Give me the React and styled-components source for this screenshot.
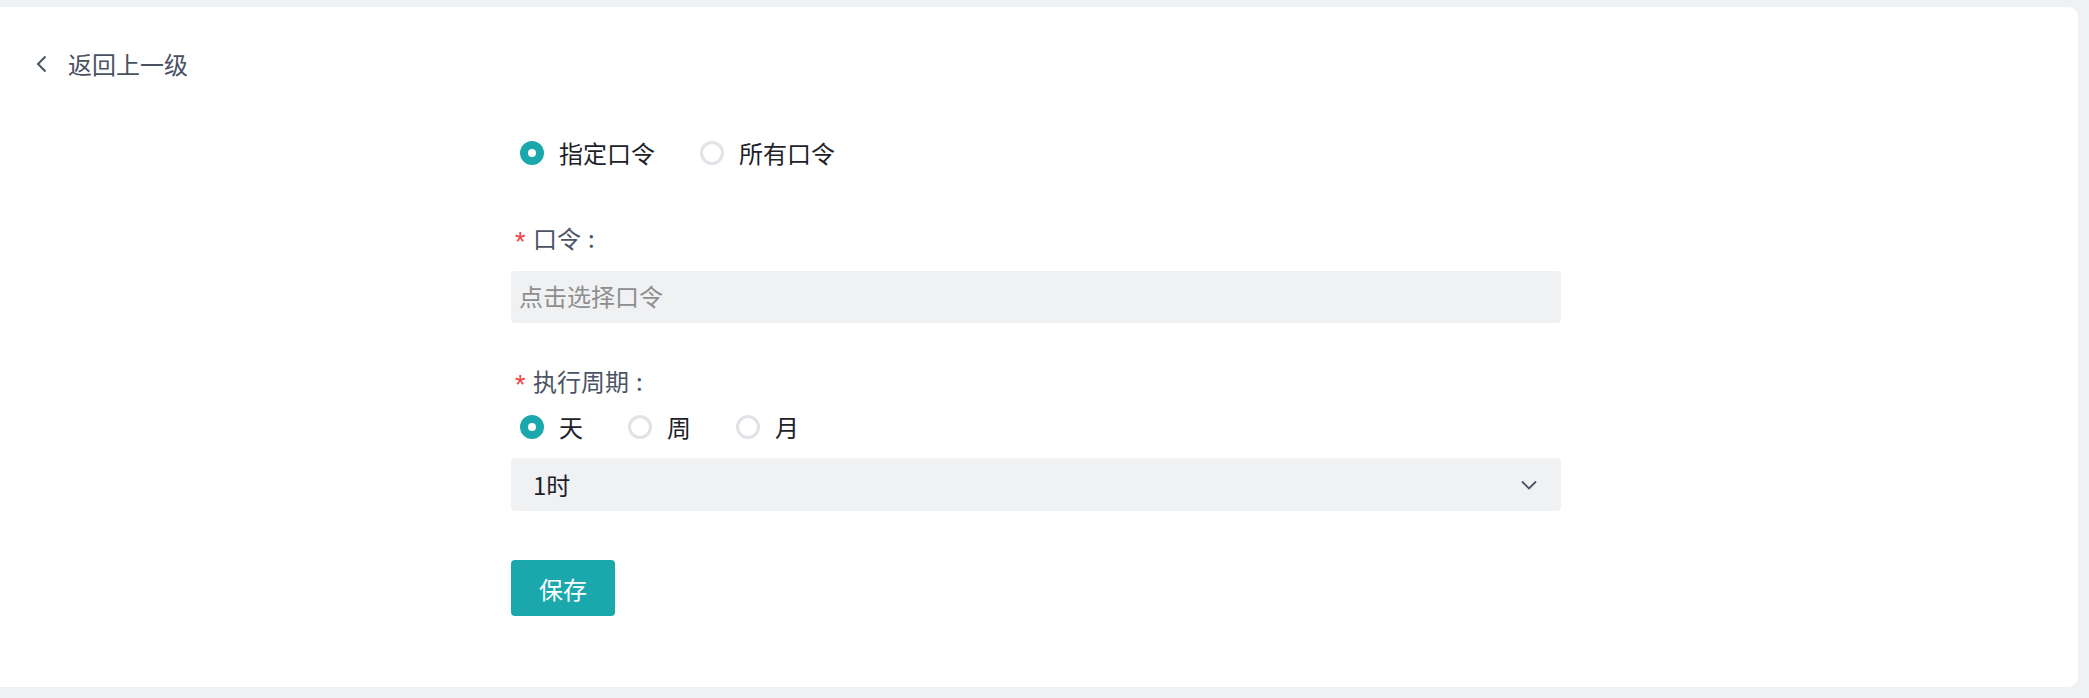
import React, { useState } from "react";
import styled, { createGlobalStyle } from "styled-components";

const GlobalStyle = createGlobalStyle`
  html, body {
    margin: 0;
    padding: 0;
    background: #f0f1f3;
  }
  * {
    box-sizing: border-box;
  }
`;

const Page = styled.div`
  height: 698px;
  padding: 7px 11px 11px 0;
  font-family: "Noto Sans CJK SC", "Noto Sans", sans-serif;
`;

const Card = styled.div`
  height: 680px;
  background: #ffffff;
  border-radius: 0 10px 10px 0;
  padding-top: 45px;
`;

const Back = styled.div`
  display: flex;
  align-items: center;
  height: 24px;
  padding-left: 35px;
  font-size: 24px;
  line-height: 24px;
  color: #4a5262;
  cursor: pointer;

  svg {
    margin-right: 20px;
  }
`;

const Form = styled.div`
  width: 1050px;
  margin-left: 511px;
  display: flex;
  flex-direction: column;
`;

const RadioRow = styled.div`
  display: flex;
  align-items: center;
  height: 24px;
  padding-left: 9px;
  gap: ${(p) => p.gap}px;
  margin-top: ${(p) => p.top}px;
`;

const RadioItem = styled.label`
  display: flex;
  align-items: center;
  gap: 15px;
  font-size: 24px;
  line-height: 24px;
  color: #1d2129;
  cursor: pointer;
`;

const Circle = styled.span`
  width: 24px;
  height: 24px;
  border-radius: 50%;
  background: #fff;
  border: ${(p) => (p.checked ? "8px solid #1ba8ad" : "3px solid #e2e3e8")};
`;

const Label = styled.div`
  display: flex;
  align-items: center;
  height: 24px;
  margin-top: ${(p) => p.top}px;
  font-size: 24px;
  line-height: 24px;
  color: #4b5466;
`;

const Star = styled.span`
  color: #f04343;
  font-size: 27px;
  width: 22px;
  padding-left: 4px;
  font-family: "Liberation Sans", sans-serif;
  line-height: 24px;
  margin-top: 8px;
`;

const Colon = styled.span`
  margin-left: 7px;
`;

const Input = styled.div`
  margin-top: 21px;
  height: 52px;
  display: flex;
  align-items: center;
  padding: 0 0 3px 8px;
  background: #f0f1f3;
  border-radius: 4px;
  font-size: 24px;
  line-height: 24px;
  color: #8e8e8e;
`;

const Select = styled.div`
  margin-top: 19px;
  height: 53px;
  display: flex;
  align-items: center;
  justify-content: space-between;
  padding: 0 24px 0 22px;
  background: #f0f1f3;
  border-radius: 4px;
  font-size: 24px;
  line-height: 24px;
  color: #1d2129;
`;

const Button = styled.button`
  margin-top: 49px;
  width: 104px;
  height: 56px;
  border: none;
  border-radius: 4px;
  background: #1ba8ad;
  color: #ffffff;
  font-family: inherit;
  font-size: 24px;
  cursor: pointer;
`;

const Radio = ({ checked, children, onClick }) => (
  <RadioItem onClick={onClick}>
    <Circle checked={checked} />
    {children}
  </RadioItem>
);

const App = () => {
  const [mode, setMode] = useState("指定口令");
  const [period, setPeriod] = useState("天");

  return (
    <>
      <GlobalStyle />
      <Page>
        <Card>
          <Back>
            <svg width="13" height="18" viewBox="0 0 13 18">
              <path d="M10.5 1.5 L3 9 L10.5 16.5" fill="none" stroke="#4a5262" strokeWidth="2" />
            </svg>
            返回上一级
          </Back>
          <Form>
            <RadioRow gap={45} top={65}>
              {["指定口令", "所有口令"].map((m) => (
                <Radio key={m} checked={mode === m} onClick={() => setMode(m)}>
                  {m}
                </Radio>
              ))}
            </RadioRow>

            <Label top={61}>
              <Star>*</Star>口令<Colon>:</Colon>
            </Label>
            <Input>点击选择口令</Input>

            <Label top={46}>
              <Star>*</Star>执行周期<Colon>:</Colon>
            </Label>
            <RadioRow gap={45} top={22}>
              {["天", "周", "月"].map((m) => (
                <Radio key={m} checked={period === m} onClick={() => setPeriod(m)}>
                  {m}
                </Radio>
              ))}
            </RadioRow>
            <Select>
              1时
              <svg width="16" height="10" viewBox="0 0 16 10">
                <path d="M1 1.5 L8 8.5 L15 1.5" fill="none" stroke="#4b5363" strokeWidth="1.8" />
              </svg>
            </Select>

            <div>
              <Button>保存</Button>
            </div>
          </Form>
        </Card>
      </Page>
    </>
  );
};

export default App;
